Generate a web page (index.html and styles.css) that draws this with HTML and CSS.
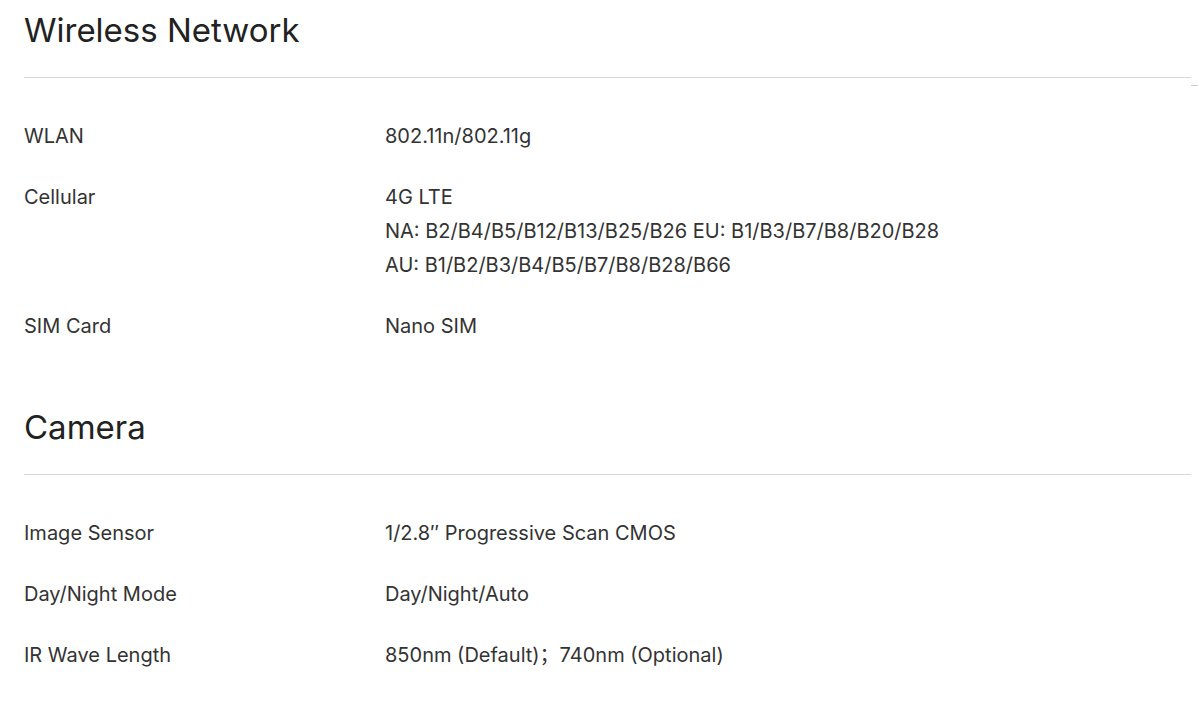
FILE: index.html
```html
<!DOCTYPE html>
<html lang="en">
<head>
<meta charset="utf-8">
<title>Specifications</title>
<link rel="stylesheet" href="styles.css">
</head>
<body>
<main class="specs">
  <section class="spec-section">
    <h2 class="spec-title">Wireless Network</h2>
    <dl class="spec-list">
      <div class="spec-row"><dt>WLAN</dt><dd>802.11n/802.11g</dd></div>
      <div class="spec-row"><dt>Cellular</dt><dd>4G LTE<br>NA: B2/B4/B5/B12/B13/B25/B26 EU: B1/B3/B7/B8/B20/B28<br>AU: B1/B2/B3/B4/B5/B7/B8/B28/B66</dd></div>
      <div class="spec-row"><dt>SIM Card</dt><dd>Nano SIM</dd></div>
    </dl>
  </section>
  <section class="spec-section">
    <h2 class="spec-title">Camera</h2>
    <dl class="spec-list">
      <div class="spec-row"><dt>Image Sensor</dt><dd>1/2.8″ Progressive Scan CMOS</dd></div>
      <div class="spec-row"><dt>Day/Night Mode</dt><dd>Day/Night/Auto</dd></div>
      <div class="spec-row"><dt>IR Wave Length</dt><dd>850nm (Default)；740nm (Optional)</dd></div>
    </dl>
  </section>
</main>
</body>
</html>
```

FILE: styles.css
```css
html, body {
  margin: 0;
  padding: 0;
  background: #ffffff;
}
body {
  font-family: Inter, "Noto Sans", "Noto Sans CJK SC", sans-serif;
  color: #333333;
}
.specs {
  position: relative;
  padding: 10px 8px 0 24px;
  display: flex;
  flex-direction: column;
  gap: 64px;
}
.specs::after {
  content: "";
  position: absolute;
  top: 85px;
  right: 1px;
  width: 7px;
  height: 1px;
  background: #d0d0d0;
}
.spec-section {
  display: flex;
  flex-direction: column;
}
.spec-title {
  margin: 0;
  font-size: 33px;
  line-height: 40px;
  font-weight: 400;
  color: #222222;
  padding-bottom: 27px;
  border-bottom: 1px solid #d6d6d6;
}
.spec-list {
  margin: 0;
  padding-top: 41px;
  display: flex;
  flex-direction: column;
  gap: 27px;
}
.spec-row {
  display: grid;
  grid-template-columns: 361px 1fr;
  font-size: 20px;
  line-height: 34px;
}
.spec-row dt, .spec-row dd {
  margin: 0;
  font-weight: 400;
}
```
